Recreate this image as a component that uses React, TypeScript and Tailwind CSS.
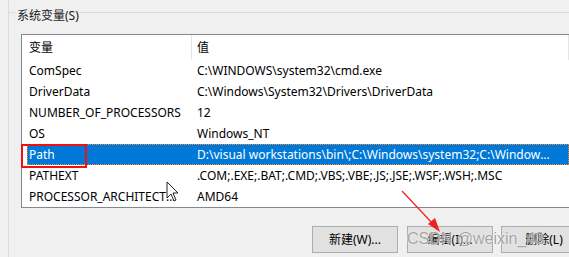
import {} from "react";

type Row = { name: string; value: string; selected?: boolean };

const rows: Row[] = [
    { name: "ComSpec", value: "C:\\WINDOWS\\system32\\cmd.exe" },
    { name: "DriverData", value: "C:\\Windows\\System32\\Drivers\\DriverData" },
    { name: "NUMBER_OF_PROCESSORS", value: "12" },
    { name: "OS", value: "Windows_NT" },
    { name: "Path", value: "D:\\visual workstations\\bin\\;C:\\Windows\\system32;C:\\Windows;C:\\Windows\\System32\\Wbem", selected: true },
    { name: "PATHEXT", value: ".COM;.EXE;.BAT;.CMD;.VBS;.VBE;.JS;.JSE;.WSF;.WSH;.MSC" },
    { name: "PROCESSOR_ARCHITECTURE", value: "AMD64" },
];

const font = "font-['Noto_Sans','Noto_Sans_CJK_SC',sans-serif]";

const App = () => {
    return (
        <div className={`relative w-[569px] h-[257px] overflow-hidden bg-[#f0f0f0] text-black ${font}`}>
            <div className="ml-[8px] h-full border-l border-[#dcdcdc] pt-[12px]">
                <div className="border-t border-[#dcdcdc]">
                    <div className="-mt-[6px] ml-[7px] w-fit bg-[#f0f0f0] px-px text-[12px] leading-[18px] text-[#1a1a1a]">
                        系统变量(S)
                    </div>

                    {/* list view */}
                    <div className="mt-[9px] ml-[12px] w-[549px] border border-[#828790] bg-white text-[12px]">
                        <div className="flex h-[25px] items-center">
                            <div className="w-[170px] h-full flex items-center pl-[7px] border-r border-[#e5e5e5]">变量</div>
                            <div className="w-[377px] h-full flex items-center pl-[5px] border-r border-[#e5e5e5]">值</div>
                        </div>
                        {rows.map((r) =>
                            r.selected ? (
                                <div key={r.name} className="ml-[5px] flex h-[21px] items-center border border-dotted border-[#ff8728] bg-[#0078d7] text-white">
                                    <div className="w-[164px] pl-[1px] pr-[8px] truncate">{r.name}</div>
                                    <div className="w-[372px] pl-[5px] pr-[12px] truncate">{r.value}</div>
                                </div>
                            ) : (
                                <div key={r.name} className="flex h-[21px] items-center">
                                    <div className="w-[170px] pl-[7px] pr-[8px] truncate">{r.name}</div>
                                    <div className="w-[377px] pl-[5px] pr-[12px] truncate">{r.value}</div>
                                </div>
                            )
                        )}
                    </div>

                    <div className="mt-[18px] ml-[303px] flex text-[12px]">
                        <button className="w-[86px] h-[27px] shrink-0 border border-[#adadad] bg-[#e1e1e1]">新建(W)...</button>
                        <button className="ml-[9px] w-[86px] h-[27px] shrink-0 border border-[#adadad] bg-[#e1e1e1]">编辑(I)...</button>
                        <button className="ml-[8px] w-[86px] h-[27px] shrink-0 border border-[#adadad] bg-[#e1e1e1]">删除(L)</button>
                    </div>
                </div>
            </div>

            {/* annotation: red box round Path */}
            <div className="absolute left-[21px] top-[144px] w-[66px] h-[24px] border-2 border-[#f01010]" />

            {/* watermark */}
            <div className="absolute left-[407px] top-[229px] font-['Liberation_Sans',sans-serif] text-[16px] leading-[20px] text-[#9a9a9a]/90 [text-shadow:0_0_2px_#fff] whitespace-nowrap">
                CSDN @weixin_43
            </div>

            {/* red arrow */}
            <svg className="absolute inset-0 pointer-events-none" width="569" height="257">
                <line x1="402" y1="191" x2="434" y2="225" stroke="#f02020" strokeWidth="1.2" />
                <polygon points="440,232 428,224 435,218" fill="#f02020" />
            </svg>

            {/* mouse cursor */}
            <svg className="absolute left-[166px] top-[181px]" width="14" height="22" viewBox="0 0 14 22">
                <path d="M1 1 L1 17 L5 13 L8 20 L10 19 L7 12 L12 12 Z" fill="#fff" stroke="#222" strokeWidth="1" strokeLinejoin="round" />
            </svg>
        </div>
    );
};

export default App;
